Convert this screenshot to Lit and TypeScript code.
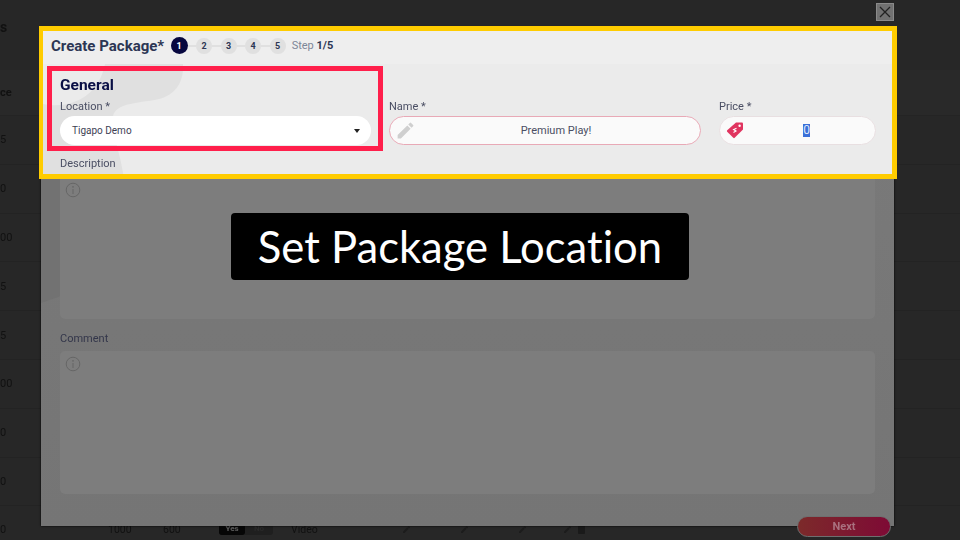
import { LitElement, html, css, svg } from "lit";
import { customElement } from "lit/decorators.js";

const pencil = svg`<path d="M3 17.25V21h3.75L17.81 9.94l-3.75-3.75L3 17.25zM20.71 7.04a1 1 0 0 0 0-1.41l-2.34-2.34a1 1 0 0 0-1.41 0l-1.83 1.83 3.75 3.75 1.83-1.83z"/>`;

@customElement("app-root")
export class AppRoot extends LitElement {
  static styles = css`
    :host { display: block; font-family: Roboto, "Liberation Sans", sans-serif; }
    .root { position: relative; width: 960px; height: 540px; overflow: hidden; background: #272727; }
    .page { filter: blur(0.7px); color: #111; font-size: 11px; }
    .heading { height: 70px; box-sizing: border-box; padding-top: 20px; font-size: 14px; font-weight: 700; line-height: 14px; }
    .head-row { height: 46px; display: flex; align-items: center; font-weight: 700; background: #292929; border-bottom: 1px solid #242424; box-sizing: border-box; }
    .row { height: 48.8px; display: flex; align-items: center; border-bottom: 1px solid #232323; box-sizing: border-box; flex: none; }
    .first { width: 108px; font-size: 11px; }
    .n2 { width: 56px; }
    .n1 { width: 55px; }
    .cells { font-size: 10.5px; padding-bottom: 2px; }
    .toggle { width: 54px; height: 12px; display: flex; background: #1f1f1f; border-radius: 3px; margin-right: 18px; font-size: 8px; font-weight: 700; line-height: 12px; text-align: center; }
    .toggle b { width: 26px; background: #060606; color: #555; border-radius: 3px; }
    .toggle span { flex: 1; color: #2a2a2a; }
    .video { width: 111px; }
    .tool { width: 58px; display: flex; }
    .tool svg { width: 9px; height: 9px; fill: #1c1c1c; }
    .tool.m { width: 45px; }
    .tool.s { width: 15px; }
    .trash { width: 7px; height: 9px; background: #1a1a1a; border-radius: 1px; }

    .modal { position: absolute; left: 41px; top: 28px; width: 853px; height: 498px; box-sizing: border-box; background: linear-gradient(#7a7a7a, #757575); box-shadow: 0 0 2px #000; padding: 144px 19px 0; overflow: hidden; }
    .modal-blob { position: absolute; left: 0; top: 0; width: 853px; height: 498px; }
    .box { position: relative; height: 147px; background: #7d7d7d; border-radius: 5px; padding: 10px 9px; box-sizing: border-box; }
    .box.c { height: 143px; padding-top: 5px; }
    .box svg { display: block; width: 16px; height: 16px; margin-left: -4px; fill: none; stroke: #666; }
    .modal-label { position: relative; margin: 13px 0 5px; font-size: 11px; line-height: 14px; color: #33364a; filter: blur(.3px); }

    .panel { position: absolute; left: 39px; top: 26px; width: 858px; height: 153px; box-sizing: border-box; border: 5px solid #ffcc00; border-left-width: 4px; background: #ebebeb; overflow: hidden; }
    .panel-inner { position: relative; filter: blur(.35px); }
    .blob { position: absolute; left: 0; top: 33px; width: 200px; height: 115px; }
    .top { position: relative; display: flex; align-items: center; height: 29px; padding: 0 0 4px 8px; background: #eee; color: #2c3654; }
    .title { font-size: 15px; font-weight: 700; line-height: 20px; margin-right: 6.5px; }
    .steps { display: flex; align-items: center; margin-right: 6px; }
    .step { width: 16px; height: 16px; border-radius: 50%; background: #e0e0e0; color: #2c3654; font-size: 9px; font-weight: 700; display: flex; align-items: center; justify-content: center; }
    .step.on { width: 17px; height: 17px; background: #07073f; color: #fff; }
    .link { width: 8.5px; height: 2px; background: #e0e0e0; }
    .count { font-size: 11px; color: #7d8698; }
    .count b { color: #2c3654; font-weight: 700; }
    .fields { position: relative; padding: 11px 0 0 17px; }
    .general { font-size: 15.5px; font-weight: 700; line-height: 20px; color: #0a0f45; margin-bottom: 5px; }
    .grid { display: grid; grid-template-columns: 311px 312px 157px; column-gap: 18px; }
    .label { font-size: 11px; line-height: 14px; color: #4a4e63; margin-bottom: 2px; }
    .input { height: 29px; box-sizing: border-box; border-radius: 15px; background: #fafafa; display: flex; align-items: center; font-size: 11px; color: #4a4e63; position: relative; }
    .select { background: #fff; padding-left: 12px; font-size: 10px; color: #3d4154; justify-content: space-between; padding-right: 11px; }
    .caret { width: 0; height: 0; border: 3.5px solid transparent; border-top: 4px solid #222; border-bottom: 0; }
    .name { border: 1px solid #e8a9b6; justify-content: center; font-size: 11px; padding-left: 22px; }
    .name svg { position: absolute; left: 5px; top: 3px; width: 21px; height: 21px; fill: #cfcfcf; }
    .price { border: 1px solid #e8dfe1; justify-content: center; font-size: 12px; padding-left: 18px; }
    .price svg { position: absolute; left: 6px; top: 4px; width: 18px; height: 18px; }
    .sel { background: #3a6fd8; color: #dfe8fa; width: 6.5px; text-align: center; line-height: 13px; }
    .desc { font-size: 11px; line-height: 14px; color: #4a4e63; margin-top: 12px; }

    .spot { position: absolute; left: 47px; top: 66px; width: 336px; height: 85px; box-sizing: border-box; border: 5px solid #ff1f4b; }
    .close { position: absolute; left: 876px; top: 3px; width: 18px; height: 18px; box-sizing: border-box; background: #717171; border: 1px solid #8a8a8a; display: flex; align-items: center; justify-content: center; }
    .close svg { width: 12px; height: 12px; stroke: #222; stroke-width: 1.3; fill: none; }
    .caption { position: absolute; left: 231px; top: 213px; width: 458px; height: 67px; background: #000; border-radius: 4px; color: #fff; font-family: Lato, sans-serif; font-size: 43.6px; font-variant-ligatures: none; line-height: 67px; text-align: center; }
    .next { position: absolute; left: 797px; top: 516px; width: 94px; height: 21px; box-sizing: border-box; border: 1px solid #6f6f6f; border-radius: 11px; background: linear-gradient(90deg, #7c2a2a, #7e0a35); color: #a9717f; font-size: 11px; font-weight: 700; display: flex; align-items: center; justify-content: center; filter: blur(.3px); }
  `;

  render() {
    const rows = ["5", "0", "00", "5", "5", "00", "0", "0"];
    const info = svg`<circle cx="8" cy="8" r="6.8"/><circle cx="8" cy="4.8" r=".9" fill="#666" stroke="none"/><path d="M8 7v5"/>`;
    return html`
      <div class="root">
        <div class="page">
          <div class="heading">s</div>
          <div class="head-row">ce</div>
          ${rows.map((r) => html`<div class="row">${r}</div>`)}
          <div class="row cells">
            <span class="first">0</span>
            <span class="n1">1000</span><span class="n2">600</span>
            <div class="toggle"><b>Yes</b><span>No</span></div>
            <span class="video">Video</span>
            <div class="tool"><svg viewBox="0 0 24 24">${pencil}</svg></div>
            <div class="tool"><svg viewBox="0 0 24 24">${pencil}</svg></div>
            <div class="tool m"><svg viewBox="0 0 24 24">${pencil}</svg></div>
            <div class="tool s"><svg viewBox="0 0 24 24">${pencil}</svg></div>
            <div class="trash"></div>
          </div>
        </div>

        <div class="modal">
          <svg class="modal-blob" viewBox="0 0 853 498"><path d="M0 150H84C70 200 60 255 20 268L0 275Z" fill="#727272"/></svg>
          <div class="box"><svg viewBox="0 0 16 16">${info}</svg></div>
          <div class="modal-label">Comment</div>
          <div class="box c"><svg viewBox="0 0 16 16">${info}</svg></div>
        </div>

        <div class="panel">
          <div class="panel-inner">
            <svg class="blob" viewBox="0 0 200 115"><path d="M62 0H140C141 15 135 27 122 33C105 40 74 36 70 52C68 68 78 90 81 115H0V40C25 45 55 35 62 0Z" fill="#e0e0e0"/></svg>
            <div class="top">
              <span class="title">Create Package*</span>
              <div class="steps">
                <div class="step on">1</div><div class="link"></div>
                <div class="step">2</div><div class="link"></div>
                <div class="step">3</div><div class="link"></div>
                <div class="step">4</div><div class="link"></div>
                <div class="step">5</div>
              </div>
              <span class="count">Step <b>1/5</b></span>
            </div>
            <div class="fields">
              <div class="general">General</div>
              <div class="grid">
                <div>
                  <div class="label">Location *</div>
                  <div class="input select">Tigapo Demo<i class="caret"></i></div>
                </div>
                <div>
                  <div class="label">Name *</div>
                  <div class="input name"><svg viewBox="0 0 24 24">${pencil}</svg>Premium Play!</div>
                </div>
                <div>
                  <div class="label">Price *</div>
                  <div class="input price">
                    <svg viewBox="0 0 18 18"><path d="M10 1.5H16a1 1 0 0 1 1 1V8.5L8.7 16.8a1 1 0 0 1-1.4 0L1.2 10.7a1 1 0 0 1 0-1.4Z" fill="#e0345f"/><circle cx="13.6" cy="4.8" r="1.2" fill="#fff"/><path d="M10.5 7.2 7.6 8.5 10 10 7.5 11.5" fill="none" stroke="#fff" stroke-width="1.1"/></svg>
                    <span class="sel">0</span>
                  </div>
                </div>
              </div>
              <div class="desc">Description</div>
            </div>
          </div>
        </div>

        <div class="spot"></div>
        <div class="close"><svg viewBox="0 0 12 12"><path d="M1 1l10 10M11 1L1 11"/></svg></div>
        <div class="caption">Set Package Location</div>
        <div class="next">Next</div>
      </div>
    `;
  }
}
